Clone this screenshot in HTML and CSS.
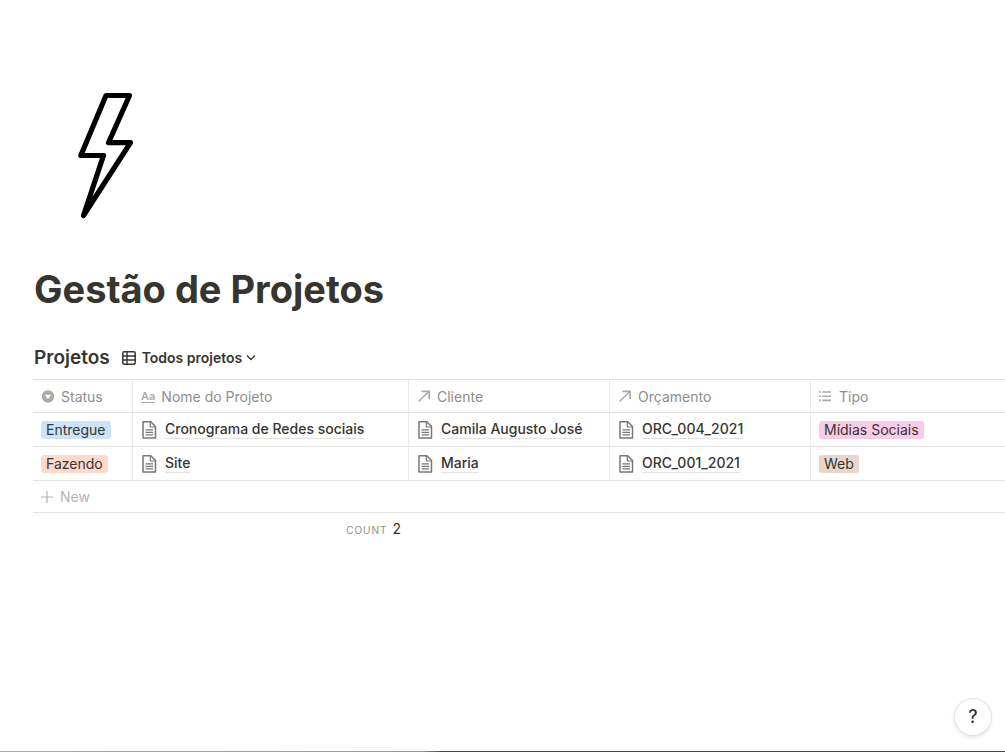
FILE: index.html
```html
<!DOCTYPE html>
<html lang="pt-BR">
<head>
    <meta charset="UTF-8" />
    <meta name="viewport" content="width=device-width, initial-scale=1.0">
    <title>Gestão de Projetos</title>
    <link rel="stylesheet" href="styles.css">
</head>
<body>

<svg class="sprite" aria-hidden="true">
    <symbol id="icon-page" viewBox="0 0 16 20">
        <path d="M2 1.800h7.800L14.500 6.500V18H2z" fill="none" stroke="#787774" stroke-width="1.500" stroke-linejoin="round" />
        <path d="M9.300 2v5h5M4.500 9.800h7.500M4.500 12.300h7.500M4.500 14.800h7.500" fill="none" stroke="#787774" stroke-width="1.200" />
    </symbol>
    <symbol id="icon-arrow" viewBox="0 0 14 14">
        <path d="M1.500 11.500 12 1.500M4.500 1.300H12.200V9" fill="none" stroke="#acaba9" stroke-width="1.700" />
    </symbol>
</svg>

<main class="page">
    <svg class="page-icon" viewBox="0 0 140 140" aria-hidden="true">
        <path d="M71 10.500H94.500L73.500 57.700H95.500L48.500 130.500 68.500 70.500H45.800z" fill="none" stroke="#000" stroke-width="5.200" stroke-linejoin="round" />
    </svg>
    <h1 class="page-title">Gestão de Projetos</h1>

    <div class="db-header">
        <h2>Projetos</h2>
        <button class="view-btn">
            <svg width="14" height="14" viewBox="0 0 14 14" aria-hidden="true">
                <rect x="0.800" y="0.800" width="12.400" height="12.400" rx="1.500" fill="none" stroke="#37352f" stroke-width="1.500" />
                <path d="M1 5h12M1 9h12M5 1v12" stroke="#37352f" stroke-width="1.400" />
            </svg>
            <span>Todos projetos</span>
            <svg class="chevron" width="10" height="10" viewBox="0 0 10 10" aria-hidden="true">
                <path d="M1 2.500l4 4 4-4" fill="none" stroke="#37352f" stroke-width="1.300" />
            </svg>
        </button>
    </div>

    <table class="db-table">
        <colgroup>
            <col class="col-status">
            <col class="col-name">
            <col class="col-relation">
            <col class="col-relation">
            <col>
        </colgroup>
        <thead>
            <tr>
                <th><div class="cell">
                    <svg width="14" height="14" viewBox="0 0 14 14" aria-hidden="true"><circle cx="7" cy="6.500" r="6.200" fill="#acaba9" /><path d="M3.800 4.700h6.400L7 9.300z" fill="#fff" /></svg>
                    Status
                </div></th>
                <th><div class="cell"><span class="title-glyph">Aa</span>Nome do Projeto</div></th>
                <th><div class="cell"><svg width="14" height="14"><use href="#icon-arrow" /></svg>Cliente</div></th>
                <th><div class="cell"><svg width="14" height="14"><use href="#icon-arrow" /></svg>Orçamento</div></th>
                <th><div class="cell">
                    <svg width="14" height="14" viewBox="0 0 14 14" aria-hidden="true"><path d="M0 2h1.800M3.300 2h8.700M0 6.200h1.800M3.300 6.200h8.700M0 10.400h1.800M3.300 10.400h8.700" stroke="#acaba9" stroke-width="1.600" /></svg>
                    Tipo
                </div></th>
            </tr>
        </thead>
        <tbody>
            <tr>
                <td><span class="tag blue">Entregue</span></td>
                <td><a class="cell" href="#"><svg width="16" height="20"><use href="#icon-page" /></svg><span>Cronograma de Redes sociais</span></a></td>
                <td><a class="cell" href="#"><svg width="16" height="20"><use href="#icon-page" /></svg><span>Camila Augusto José</span></a></td>
                <td><a class="cell" href="#"><svg width="16" height="20"><use href="#icon-page" /></svg><span>ORC_004_2021</span></a></td>
                <td><span class="tag pink">Mídias Sociais</span></td>
            </tr>
            <tr>
                <td><span class="tag orange">Fazendo</span></td>
                <td><a class="cell" href="#"><svg width="16" height="20"><use href="#icon-page" /></svg><span>Site</span></a></td>
                <td><a class="cell" href="#"><svg width="16" height="20"><use href="#icon-page" /></svg><span>Maria</span></a></td>
                <td><a class="cell" href="#"><svg width="16" height="20"><use href="#icon-page" /></svg><span>ORC_001_2021</span></a></td>
                <td><span class="tag brown">Web</span></td>
            </tr>
            <tr class="new-row">
                <td colspan="5">
                    <button class="new-btn">
                        <svg width="12" height="12" viewBox="0 0 12 12" aria-hidden="true"><path d="M6 0v12M0 6h12" stroke="#b4b3b0" stroke-width="1.200" /></svg>
                        New
                    </button>
                </td>
            </tr>
        </tbody>
        <tfoot>
            <tr>
                <td></td>
                <td class="count"><span>Count</span> 2</td>
                <td colspan="3"></td>
            </tr>
        </tfoot>
    </table>
</main>

<button class="help-btn" aria-label="Help">?</button>
<div class="bottom-edge"></div>

</body>
</html>
```

FILE: styles.css
```css
* {
    box-sizing: border-box;
}

body {
    margin: 0;
    min-height: 100vh;
    background-color: #fff;
    color: #37352f;
    font-family: Inter, "Liberation Sans", sans-serif;
    font-size: 14px;
    line-height: 20px;
}

button {
    padding: 0;
    border: none;
    background: none;
    color: inherit;
    font: inherit;
    cursor: pointer;
}

svg {
    display: block;
    flex-shrink: 0;
}

.sprite {
    position: absolute;
    width: 0;
    height: 0;
}

.page {
    padding: 85px 0 0 33px;
}

.page-icon {
    width: 140px;
    height: 140px;
    margin-left: 2px;
}

.page-title {
    margin: 40px 0 0 1px;
    font-size: 38px;
    font-weight: 700;
    line-height: 48px;
}

.db-header {
    display: flex;
    align-items: center;
    gap: 12px;
    height: 42px;
    margin-top: 24px;
    padding-left: 1px;
}

.db-header h2 {
    margin: 0;
    font-size: 19px;
    font-weight: 600;
    line-height: 24px;
}

.view-btn {
    display: flex;
    align-items: center;
    gap: 6px;
    font-weight: 600;
}

.view-btn .chevron {
    margin-left: -2px;
}

.db-table {
    width: 100%;
    table-layout: fixed;
    border-spacing: 0;
    border-top: 1px solid #e3e2e0;
}

.col-status {
    width: 100px;
}

.col-name {
    width: 276px;
}

.col-relation {
    width: 201px;
}

.db-table th,
.db-table td {
    height: 34px;
    padding: 0 8px;
    border-right: 1px solid #e9e9e7;
    border-bottom: 1px solid #e3e2e0;
    text-align: left;
    white-space: nowrap;
}

.db-table th {
    height: 33px;
    padding-top: 2px;
    color: #8f8e8b;
    font-weight: 400;
}

.db-table th:last-child,
.db-table td:last-child {
    border-right: none;
}

.cell {
    display: flex;
    align-items: center;
    gap: 6px;
}

.title-glyph {
    border-bottom: 1px solid #acaba9;
    color: #acaba9;
    font-size: 11px;
    font-weight: 600;
    line-height: 11px;
}

a.cell {
    gap: 8px;
    color: #37352f;
    font-weight: 500;
    text-decoration: none;
}

a.cell span {
    border-bottom: 1px solid #e3e2e0;
    line-height: 18px;
}

.tag {
    display: inline-block;
    padding: 0 5px;
    border-radius: 3px;
    line-height: 18px;
}

.blue {
    background-color: #cce4f9;
}

.orange {
    background-color: #fdd9cd;
}

.pink {
    background-color: #f8cce6;
}

.brown {
    background-color: #e8d5cc;
}

.db-table .new-row td {
    height: 32px;
}

.new-btn {
    display: flex;
    align-items: center;
    gap: 7px;
    color: #b4b3b0;
}

.db-table tfoot td {
    height: 32px;
    border: none;
}

.db-table .count {
    text-align: right;
}

.count span {
    margin-right: 1px;
    color: #8f8e8b;
    font-size: 10px;
    letter-spacing: 1px;
    text-transform: uppercase;
}

.help-btn {
    position: fixed;
    right: 14px;
    bottom: 17px;
    width: 36px;
    height: 36px;
    border-radius: 50%;
    background-color: #fff;
    box-shadow: 0 0 0 1px #e3e2e0, 0 2px 5px rgba(0, 0, 0, 0.12);
    font-size: 18px;
    font-weight: 500;
}

.bottom-edge {
    position: fixed;
    right: 0;
    bottom: 0;
    left: 0;
    height: 1px;
    background: linear-gradient(to right, #aaa, #999 42%, #444 44%);
}
```
